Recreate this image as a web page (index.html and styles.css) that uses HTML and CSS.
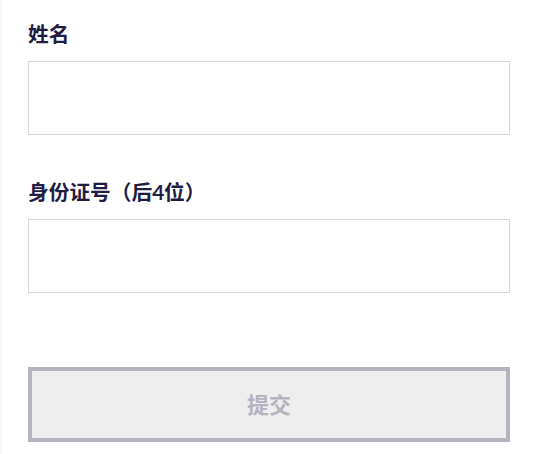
FILE: index.html
```html
<!DOCTYPE html>
<html lang="zh">
<head>
<meta charset="utf-8">
<link rel="stylesheet" href="styles.css">
</head>
<body>
<form class="form">
  <div class="field">
    <label class="label">姓名</label>
    <input class="input" type="text">
  </div>
  <div class="field">
    <label class="label">身份证号（后4位）</label>
    <input class="input" type="text">
  </div>
  <button class="submit" type="button" disabled>提交</button>
</form>
</body>
</html>
```
FILE: styles.css
```css
html, body {
  margin: 0;
  padding: 0;
  background: #ffffff;
}
body {
  border-left: 2px solid #f7f7f7;
  min-height: 454px;
  box-sizing: border-box;
  font-family: Lato, "Noto Sans CJK SC", sans-serif;
}
.form {
  width: 482px;
  padding: 20px 0 0 26px;
  display: flex;
  flex-direction: column;
}
.field {
  display: flex;
  flex-direction: column;
  margin-bottom: 43px;
}
.label {
  font-size: 20.7px;
  font-weight: 700;
  color: #221c45;
  line-height: 28px;
  margin-bottom: 13px;
}
.input {
  box-sizing: border-box;
  height: 74px;
  width: 482px;
  border: 1px solid #d6d6d6;
  margin: 0;
  padding: 0 12px;
  background: #fff;
  outline: none;
}
.submit {
  box-sizing: border-box;
  margin-top: 31px;
  width: 482px;
  height: 75px;
  border: 4px solid #b5b3be;
  background: #eeeeee;
  color: #b5b3be;
  font-family: Lato, "Noto Sans CJK SC", sans-serif;
  font-size: 22px;
  font-weight: 700;
  padding: 0 0 3px;
}
```
